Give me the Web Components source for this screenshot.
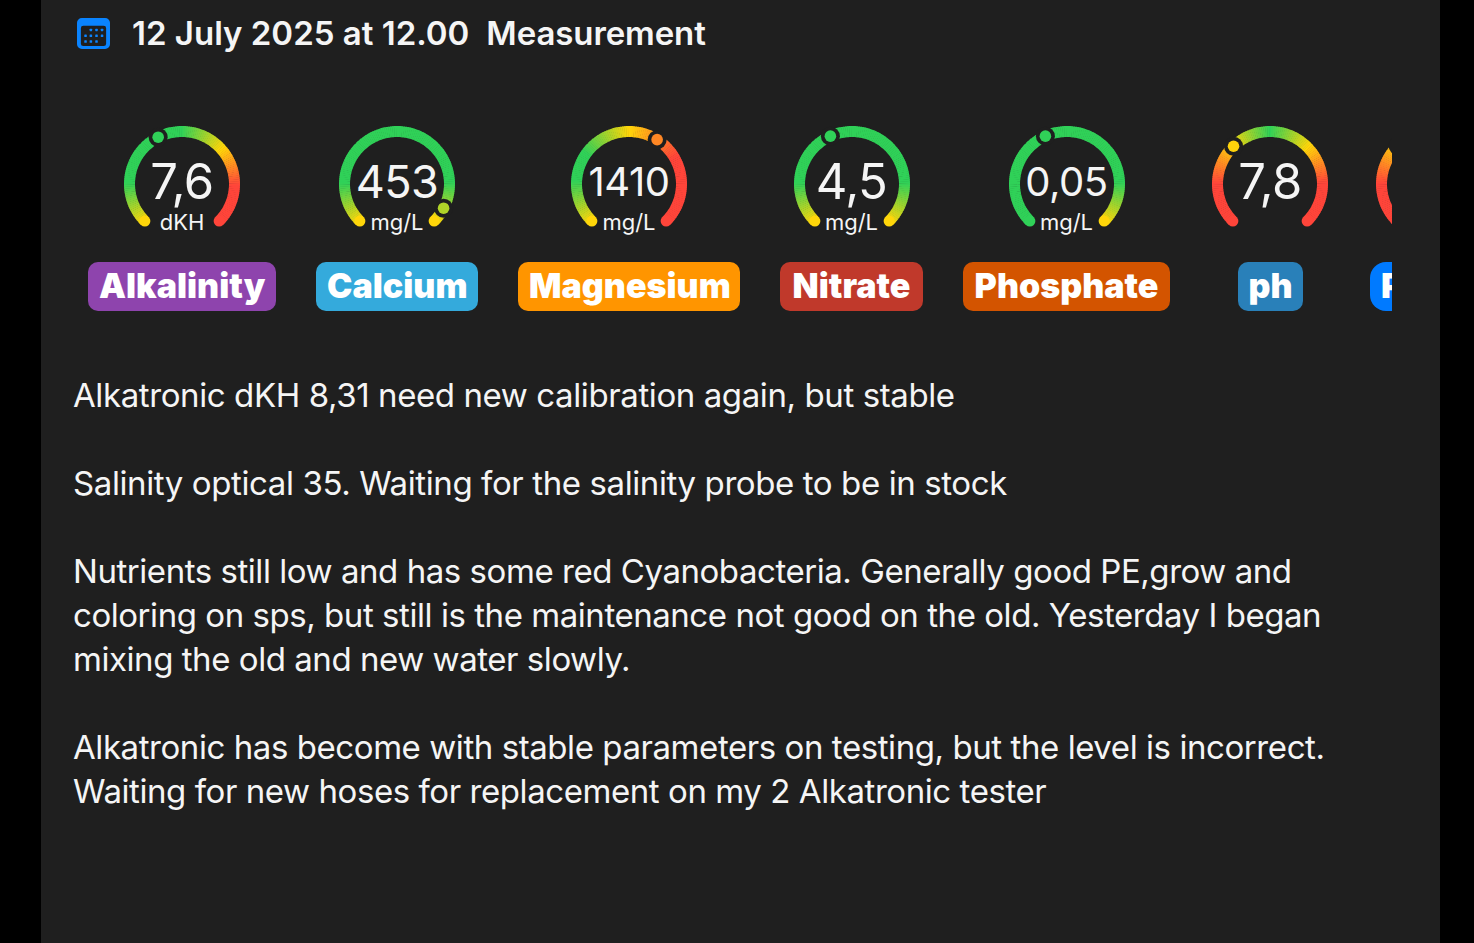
<!DOCTYPE html>
<html lang="en">
<head>
<meta charset="utf-8">
<title>Measurement</title>
<style>
  html, body { margin: 0; height: 100%; background: #000; overflow: hidden; }
  body { font-family: Inter, "Liberation Sans", sans-serif; color: #f5f5f5; }
</style>
</head>
<body>
<log-panel>
  <log-title slot="title">
    <span>12 July 2025 at 12.00</span>
    <span>Measurement</span>
  </log-title>

  <gauge-strip slot="gauges">
    <param-gauge value="7,6" unit="dKH" size="49" pos="0.4" stops="0:y,0.17:g,0.5:g,0.68:y,0.84:r,1:r" label="Alkalinity" color="#8e44ad" badge-width="188"></param-gauge>
    <param-gauge value="453" unit="mg/L" size="45" pos="0.935" stops="0:y,0.17:g,0.83:g,1:y" label="Calcium" color="#34aadc" badge-width="162"></param-gauge>
    <param-gauge value="1410" unit="mg/L" size="40" pos="0.62" stops="0:y,0.18:g,0.3:g,0.5:y,0.72:r,1:r" label="Magnesium" color="#ff9500" badge-width="222"></param-gauge>
    <param-gauge value="4,5" unit="mg/L" size="49" pos="0.41" stops="0:y,0.17:g,0.83:g,1:y" label="Nitrate" color="#c0392b" badge-width="143"></param-gauge>
    <param-gauge value="0,05" unit="mg/L" size="40" pos="0.41" stops="0:g,0.83:g,1:y" label="Phosphate" color="#d35400" badge-width="207"></param-gauge>
    <param-gauge value="7,8" size="49" pos="0.337" stops="0:r,0.17:r,0.34:y,0.5:g,0.67:y,0.83:r,1:r" label="ph" color="#2980b9" badge-width="65"></param-gauge>
    <param-gauge pos="0.34" stops="0:r,0.17:r,0.34:y,0.5:g,0.67:y,0.83:r,1:r" label="P" color="#007aff" badge-width="128" align="left" radius="16"></param-gauge>
  </gauge-strip>

  <note-text slot="notes">
    <p>Alkatronic dKH 8,31 need new calibration again, but stable</p>
    <p>Salinity optical 35. Waiting for the salinity probe to be in stock</p>
    <p style="letter-spacing: -0.45px">Nutrients still low and has some red Cyanobacteria. Generally good PE,grow and coloring on sps, but still is the maintenance not good on the old. Yesterday I began mixing the old and new water slowly.</p>
    <p style="letter-spacing: -0.43px">Alkatronic has become with stable parameters on testing, but the level is incorrect. Waiting for new hoses for replacement on my 2 Alkatronic tester</p>
  </note-text>
</log-panel>

<script>
// Outer card, black bars left and right come from the body background
class LogPanel extends HTMLElement {
  constructor() {
    super();
    this.attachShadow({ mode: 'open' });
    this.shadowRoot.innerHTML = `
      <style>
        :host {
          display: flex;
          flex-direction: column;
          box-sizing: border-box;
          width: 1399px;
          height: 943px;
          margin-left: 41px;
          padding: 0 48px 0 33px;
          background: #1f1f1f;
        }
      </style>
      <slot name="title"></slot>
      <slot name="gauges"></slot>
      <slot name="notes"></slot>
    `;
  }
}
customElements.define('log-panel', LogPanel);

class LogTitle extends HTMLElement {
  constructor() {
    super();
    this.attachShadow({ mode: 'open' });
    this.shadowRoot.innerHTML = `
      <style>
        :host {
          display: flex;
          align-items: center;
          height: 66px;
          font-size: 33px;
          font-weight: 600;
          color: #f5f5f5;
        }
        svg { display: block; margin: 1px 22px 0 3px; }
        .text { display: flex; gap: 17px; white-space: nowrap; }
        ::slotted(span:last-child) { letter-spacing: -0.1px; }
      </style>
      <svg width="33" height="31" viewBox="0 0 34 32" preserveAspectRatio="none">
        <path fill="#0a84ff" fill-rule="evenodd" d="M5 0h24a5 5 0 0 1 5 5v22a5 5 0 0 1-5 5H5a5 5 0 0 1-5-5V5a5 5 0 0 1 5-5zM6.500 8A2.500 2.500 0 0 0 4 10.500v16A2.500 2.500 0 0 0 6.500 29h21a2.500 2.500 0 0 0 2.500-2.500v-16A2.500 2.500 0 0 0 27.500 8z"/>
        <g fill="#0a84ff">
          <rect x="13" y="11" width="2.600" height="2.600" rx=".6"/><rect x="18.800" y="11" width="2.600" height="2.600" rx=".6"/><rect x="24.500" y="11" width="2.600" height="2.600" rx=".6"/>
          <rect x="7.500" y="17" width="2.600" height="2.600" rx=".6"/><rect x="13" y="17" width="2.600" height="2.600" rx=".6"/><rect x="18.800" y="17" width="2.600" height="2.600" rx=".6"/><rect x="24.500" y="17" width="2.600" height="2.600" rx=".6"/>
          <rect x="7.500" y="23" width="2.600" height="2.600" rx=".6"/><rect x="13" y="23" width="2.600" height="2.600" rx=".6"/><rect x="18.800" y="23" width="2.600" height="2.600" rx=".6"/>
        </g>
      </svg>
      <div class="text"><slot></slot></div>
    `;
  }
}
customElements.define('log-title', LogTitle);

// Horizontally scrolling row, last gauge is cut off on the right edge
class GaugeStrip extends HTMLElement {
  constructor() {
    super();
    this.attachShadow({ mode: 'open' });
    this.shadowRoot.innerHTML = `
      <style>
        :host {
          display: flex;
          gap: 40px;
          margin-top: 58px;
          padding-left: 14px;
          overflow: hidden;
        }
      </style>
      <slot></slot>
    `;
  }
}
customElements.define('gauge-strip', GaugeStrip);

const GAUGE_COLORS = {
  g: [48, 209, 88],
  y: [255, 214, 10],
  r: [255, 69, 58]
};

class ParamGauge extends HTMLElement {
  constructor() {
    super();
    this.attachShadow({ mode: 'open' });
  }

  connectedCallback() {
    this.render();
  }

  // "0:y,0.5:g" -> [[0, [r,g,b]], [0.5, [r,g,b]]]
  parseStops() {
    return this.getAttribute('stops').split(',').map(s => {
      const [at, name] = s.split(':');
      return [parseFloat(at), GAUGE_COLORS[name]];
    });
  }

  colorAt(stops, t) {
    for (let i = 1; i < stops.length; i++) {
      if (t <= stops[i][0]) {
        const [a, ca] = stops[i - 1];
        const [b, cb] = stops[i];
        const k = (t - a) / (b - a);
        return `rgb(${ca.map((c, n) => Math.round(c + (cb[n] - c) * k)).join(',')})`;
      }
    }
    const last = stops[stops.length - 1][1];
    return `rgb(${last.join(',')})`;
  }

  point(t, r) {
    // t = 0 is bottom left, t = 1 is bottom right, 270 degrees in total
    const a = (135 + t * 270) * Math.PI / 180;
    return [60 + r * Math.cos(a), 60 + r * Math.sin(a)];
  }

  renderArc(stops) {
    const R = 52.5;
    const steps = 135;
    let out = '';
    for (let i = 0; i < steps; i++) {
      const t0 = i / steps;
      const t1 = Math.min(1, (i + 1.25) / steps);
      const [x0, y0] = this.point(t0, R);
      const [x1, y1] = this.point(t1, R);
      const color = this.colorAt(stops, (t0 + t1) / 2);
      out += `<path d="M${x0.toFixed(2)} ${y0.toFixed(2)}A${R} ${R} 0 0 1 ${x1.toFixed(2)} ${y1.toFixed(2)}" stroke="${color}"/>`;
    }
    const [sx, sy] = this.point(0, R);
    const [ex, ey] = this.point(1, R);
    out += `<circle cx="${sx}" cy="${sy}" r="5.5" fill="${this.colorAt(stops, 0)}"/>`;
    out += `<circle cx="${ex}" cy="${ey}" r="5.5" fill="${this.colorAt(stops, 1)}"/>`;
    return out;
  }

  render() {
    const value = this.getAttribute('value') || '';
    const unit = this.getAttribute('unit') || '';
    const size = this.getAttribute('size') || 48;
    const label = this.getAttribute('label');
    const color = this.getAttribute('color');
    const badgeWidth = this.getAttribute('badge-width');
    const align = this.getAttribute('align') || 'center';
    const radius = this.getAttribute('radius') || 10;
    const pos = parseFloat(this.getAttribute('pos'));
    const stops = this.parseStops();
    const [dx, dy] = this.point(pos, 52.5);

    this.shadowRoot.innerHTML = `
      <style>
        :host {
          display: flex;
          flex: none;
          flex-direction: column;
          align-items: center;
          gap: 18px;
          min-width: 120px;
        }
        .dial { display: grid; width: 120px; height: 120px; }
        .dial > * { grid-area: 1 / 1; }
        svg { display: block; }
        svg path { fill: none; stroke-width: 11; }
        .value {
          justify-self: center;
          margin-top: 31px;
          height: 54px;
          line-height: 54px;
          font-size: ${size}px;
          font-weight: 400;
          letter-spacing: -0.5px;
          white-space: nowrap;
        }
        .unit {
          justify-self: center;
          margin-top: 85px;
          height: 26px;
          line-height: 26px;
          font-size: 22px;
        }
        .badge {
          box-sizing: border-box;
          width: ${badgeWidth}px;
          height: 49px;
          line-height: 47px;
          padding: 0 11px;
          border-radius: ${radius}px;
          background: ${color};
          color: #fff;
          font-size: 34px;
          font-weight: 900;
          text-align: ${align};
          white-space: nowrap;
        }
      </style>
      <div class="dial">
        <svg width="120" height="120" viewBox="0 0 120 120">
          ${this.renderArc(stops)}
          <circle cx="${dx}" cy="${dy}" r="9.500" fill="#1f1f1f"/>
          <circle cx="${dx}" cy="${dy}" r="5.800" fill="${this.colorAt(stops, pos)}"/>
        </svg>
        ${value ? `<div class="value">${value}</div>` : ''}
        ${unit ? `<div class="unit">${unit}</div>` : ''}
      </div>
      <div class="badge">${label}</div>
    `;
  }
}
customElements.define('param-gauge', ParamGauge);

class NoteText extends HTMLElement {
  constructor() {
    super();
    this.attachShadow({ mode: 'open' });
    this.shadowRoot.innerHTML = `
      <style>
        :host {
          display: block;
          margin-top: 62px;
          margin-left: -1px;
          font-size: 33px;
          line-height: 44px;
          letter-spacing: -0.4px;
          color: #f5f5f5;
        }
        ::slotted(p) { margin: 0 0 44px; }
      </style>
      <slot></slot>
    `;
  }
}
customElements.define('note-text', NoteText);
</script>
</body>
</html>
